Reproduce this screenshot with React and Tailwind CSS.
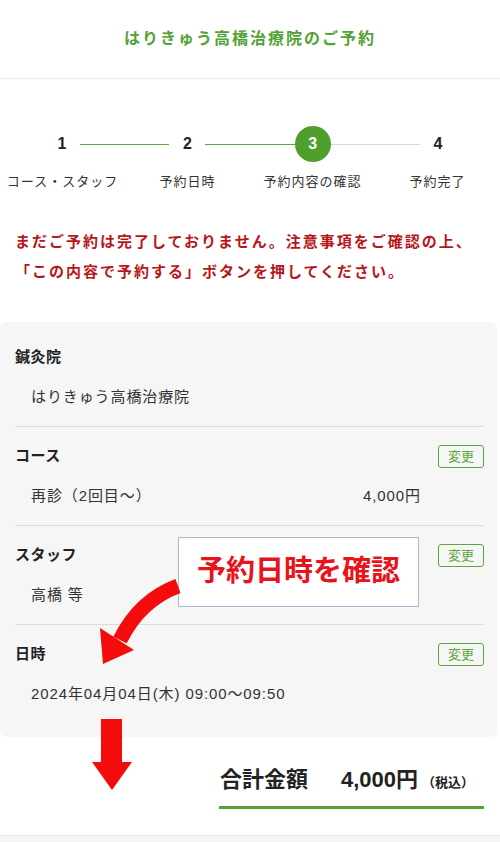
const FONT = { fontFamily: '"Liberation Sans", "Noto Sans CJK JP", "Noto Sans", sans-serif' };

function Step({ n, active }) {
  return (
    <div
      className={
        "flex h-9 w-9 shrink-0 items-center justify-center rounded-full text-[16px] font-bold " +
        (active ? "bg-[#4f9f2c] text-white" : "text-[#222]")
      }
    >
      {n}
    </div>
  );
}

function ChangeButton() {
  return (
    <button className="flex h-[23px] w-[46px] items-center justify-center rounded-[3px] border-[1.5px] border-[#5ea53d] text-[13px] leading-none text-[#5ea53d]">
      変更
    </button>
  );
}

function Section({ label, children, change, first, last }) {
  return (
    <div
      className={
        (first ? "pt-[24px] " : "pt-[18px] ") +
        (last ? "pb-[30px]" : "border-b border-[#dcdcdc] pb-[16px]")
      }
    >
      <div className="flex h-6 items-center justify-between">
        <span className="text-[15px] font-bold tracking-[0.5px] text-[#222]">{label}</span>
        {change && <ChangeButton />}
      </div>
      <div className="mt-4 flex h-6 items-center justify-between pl-4 pr-[63px] text-[15px] tracking-[0.9px] text-[#333]">
        {children}
      </div>
    </div>
  );
}

export default function App() {
  const steps = ["コース・スタッフ", "予約日時", "予約内容の確認", "予約完了"];

  return (
    <div className="min-h-[842px] w-[500px] bg-white" style={FONT}>
      <header className="flex h-[79px] items-center justify-center border-b border-[#ececec]">
        <h1 className="text-[16px] font-bold tracking-[2px] text-[#52a234]">
          はりきゅう高橋治療院のご予約
        </h1>
      </header>

      <div className="mt-[47px] flex items-center px-[44px]">
        <Step n="1" />
        <div className="h-px flex-1 bg-[#5ea53d]" />
        <Step n="2" />
        <div className="h-px flex-1 bg-[#5ea53d]" />
        <Step n="3" active />
        <div className="h-px flex-1 bg-[#d8d8d8]" />
        <Step n="4" />
      </div>
      <div className="mt-[10px] grid grid-cols-4 text-center text-[13px] tracking-[1px] text-[#333]">
        {steps.map((s) => (
          <span key={s}>{s}</span>
        ))}
      </div>

      <p className="mt-[35px] px-[15px] text-[15px] font-bold leading-[30px] tracking-[2px] text-[#b8161c]">
        まだご予約は完了しておりません。注意事項をご確認の上、「この内容で予約する」ボタンを押してください。
      </p>

      <div className="relative mt-[35px] mr-[3px] rounded-[6px] bg-[#f6f6f6] pl-[15px] pr-[13px]">
        <Section label="鍼灸院" first>
          <span>はりきゅう高橋治療院</span>
        </Section>
        <Section label="コース" change>
          <span>再診（2回目〜）</span>
          <span>4,000円</span>
        </Section>
        <Section label="スタッフ" change>
          <span>高橋 等</span>
        </Section>
        <Section label="日時" change last>
          <span>2024年04月04日(木) 09:00〜09:50</span>
        </Section>

        {/* annotation overlay */}
        <div className="absolute left-[178px] top-[215px] flex h-[70px] w-[241px] items-center justify-center border border-[#a9b9d2] bg-white text-[29px] font-bold text-[#e8141b]">
          予約日時を確認
        </div>
        <svg className="absolute left-0 top-0 overflow-visible" width="1" height="1">
          <path d="M178 264 Q140 278 120 318" fill="none" stroke="#f40c0c" strokeWidth="15" />
          <polygon points="103,342 100,306 134,328" fill="#f40c0c" />
        </svg>
      </div>

      <div className="relative flex justify-end pr-[16px]">
        <svg className="absolute left-[92px] top-[-18px]" width="40" height="72" viewBox="0 0 40 72">
          <rect x="9" y="0" width="21" height="43" fill="#f40c0c" />
          <polygon points="0,43 40,43 20,71" fill="#f40c0c" />
        </svg>
        <div className="mt-[28px] flex w-[265px] items-baseline border-b-[3px] border-[#52a234] pb-[11px] pl-[1px] text-[#222]">
          <span className="text-[22px] font-bold leading-[30px]">合計金額</span>
          <span className="ml-[33px] text-[22px] font-bold leading-[30px]">4,000円</span>
          <span className="ml-[4px] text-[13px] font-bold">（税込）</span>
        </div>
      </div>

      <div className="mt-[26px] h-[7px] border-t border-[#e6e6e6] bg-[#f5f5f5]" />
    </div>
  );
}
